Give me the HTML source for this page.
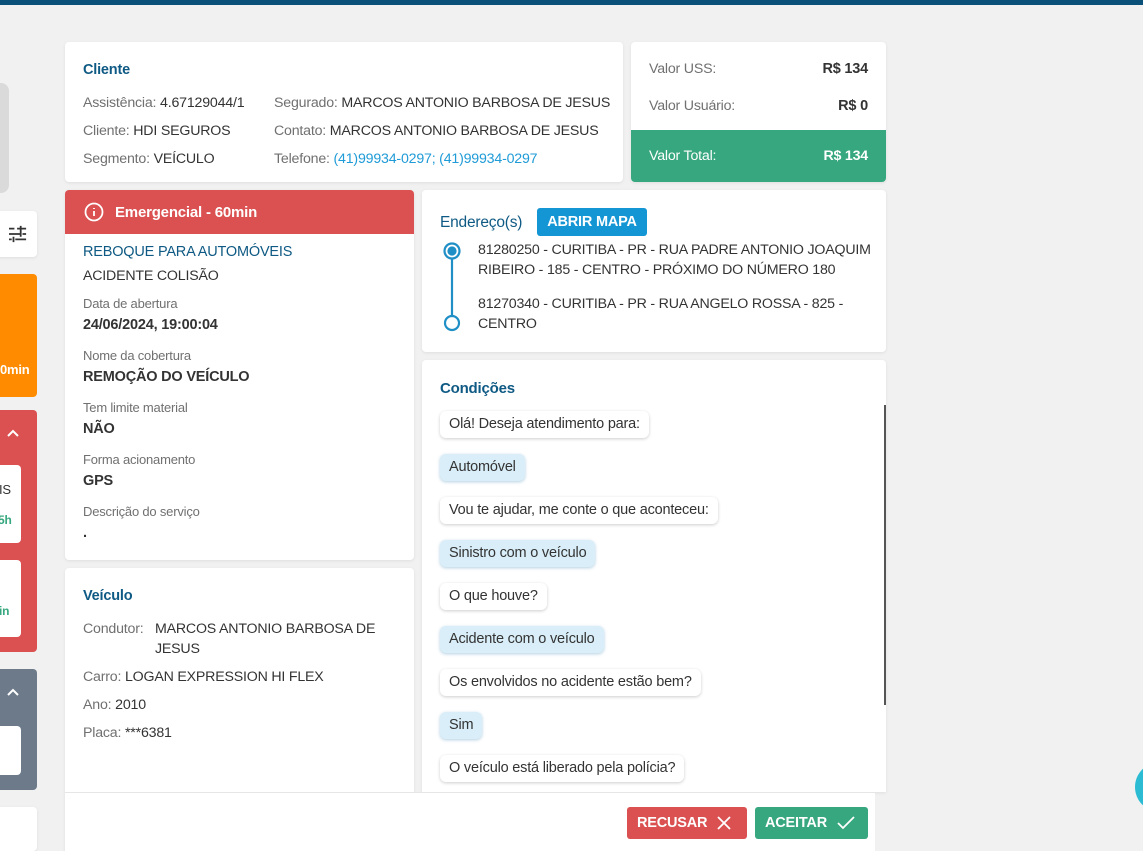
<!DOCTYPE html>
<html><head><meta charset="utf-8"><style>
*{box-sizing:border-box;margin:0;padding:0}
html,body{width:1143px;height:851px;overflow:hidden}
body{background:#f1f1f1;font-family:"Liberation Sans",sans-serif;font-size:14.2px;color:#333;position:relative;letter-spacing:-0.2px}
.a{position:absolute}
.card{position:absolute;background:#fff;border-radius:4px;box-shadow:0 1px 3px rgba(0,0,0,.08)}
.t{color:#0f5a84;font-weight:bold;font-size:14.5px}
.g{color:#707070}
.lb{color:#707070;font-size:13px}
.v{font-weight:bold;color:#333;font-size:14.5px}
.b{position:absolute;left:440px;height:27px;line-height:27px;padding:0 9px;border-radius:6px;background:#fff;box-shadow:0 1px 3px rgba(0,0,0,.2);font-size:14.5px;white-space:nowrap}
.b.u{background:#d9eef8;box-shadow:0 1px 3px rgba(40,120,170,.35)}
</style></head><body>
<div class="a" style="left:0;top:0;width:1143px;height:5px;background:#0b5079"></div>
<div class="a" style="left:-10px;top:83px;width:19px;height:110px;background:#dadada;border-radius:8px"></div>
<div class="card" style="left:-5px;top:211px;width:42px;height:46px">
<svg class="a" style="left:14px;top:14px" width="18" height="18" viewBox="0 0 20 20" fill="none" stroke="#333" stroke-width="2"><path d="M0 4h6M9 4h10M13 1v6M0 10h12M15 10h4M13 7v6M0 16h3M7 16h12M5 13v6"/></svg></div>
<div class="a" style="left:-5px;top:274px;width:42px;height:123px;background:#ff8c00;border-radius:4px"><span class="a" style="left:5px;top:88px;color:#fff;font-weight:bold;font-size:13px">0min</span></div>
<div class="a" style="left:-5px;top:410px;width:42px;height:242px;background:#db5050;border-radius:4px">
<svg class="a" style="left:12px;top:19px" width="12" height="8" viewBox="0 0 12 8" fill="none" stroke="#fff" stroke-width="2"><path d="M1 7l5-5 5 5"/></svg>
<div class="a" style="left:0;top:55px;width:26px;height:78px;background:#fff;border-radius:4px"><span class="a" style="left:4px;top:17px;font-size:13px">IS</span><span class="a" style="left:3px;top:48px;font-size:12px;color:#36a77e;font-weight:bold">5h</span></div>
<div class="a" style="left:0;top:150px;width:26px;height:77px;background:#fff;border-radius:4px"><span class="a" style="left:4px;top:44px;font-size:12px;color:#36a77e;font-weight:bold">in</span></div>
</div>
<div class="a" style="left:-5px;top:669px;width:42px;height:121px;background:#6c7a8a;border-radius:4px">
<svg class="a" style="left:12px;top:19px" width="12" height="8" viewBox="0 0 12 8" fill="none" stroke="#fff" stroke-width="2"><path d="M1 7l5-5 5 5"/></svg>
<div class="a" style="left:0;top:57px;width:26px;height:49px;background:#fff;border-radius:4px"></div></div>
<div class="card" style="left:-5px;top:807px;width:42px;height:44px"></div>
<div class="card" style="left:65px;top:42px;width:558px;height:140px">
<div class="a t" style="left:18px;top:20px">Cliente</div>
<div class="a" style="left:18px;top:47px;line-height:28px"><span class="g">Assistência:</span> 4.67129044/1<br><span class="g">Cliente:</span> HDI SEGUROS<br><span class="g">Segmento:</span> VEÍCULO</div>
<div class="a" style="left:209px;top:47px;line-height:28px;white-space:nowrap"><span class="g">Segurado:</span> MARCOS ANTONIO BARBOSA DE JESUS<br><span class="g">Contato:</span> MARCOS ANTONIO BARBOSA DE JESUS<br><span class="g">Telefone:</span> <span style="color:#1f9bd7">(41)99934-0297; (41)99934-0297</span></div>
</div>
<div class="card" style="left:631px;top:42px;width:255px;height:140px;overflow:hidden">
<div class="a g" style="left:18px;top:19px">Valor USS:</div><div class="a v" style="right:18px;top:19px">R$ 134</div>
<div class="a g" style="left:18px;top:56px">Valor Usuário:</div><div class="a v" style="right:18px;top:56px">R$ 0</div>
<div class="a" style="left:0;top:88px;width:255px;height:52px;background:#36a77e;color:#fff">
<span class="a" style="left:18px;top:18px">Valor Total:</span><span class="a" style="right:18px;top:18px;font-weight:bold">R$ 134</span></div>
</div>
<div class="card" style="left:65px;top:190px;width:349px;height:370px;overflow:hidden">
<div class="a" style="left:0;top:0;width:349px;height:44px;background:#db5050;color:#fff;font-weight:bold;font-size:15px">
<svg class="a" style="left:19px;top:12px" width="20" height="20" viewBox="0 0 20 20" fill="none" stroke="#fff" stroke-width="1.8"><circle cx="10" cy="10" r="8.5"/><path d="M10 9v5M10 6v1"/></svg>
<span class="a" style="left:50px;top:14px">Emergencial - 60min</span></div>
<div class="a" style="left:18px;top:54px;color:#0f5a84;font-size:14.5px">REBOQUE PARA AUTOMÓVEIS</div>
<div class="a" style="left:18px;top:78px">ACIDENTE COLISÃO</div>
<div class="a lb" style="left:18px;top:106px">Data de abertura</div><div class="a v" style="left:18px;top:127px">24/06/2024, 19:00:04</div>
<div class="a lb" style="left:18px;top:158px">Nome da cobertura</div><div class="a v" style="left:18px;top:179px">REMOÇÃO DO VEÍCULO</div>
<div class="a lb" style="left:18px;top:210px">Tem limite material</div><div class="a v" style="left:18px;top:231px">NÃO</div>
<div class="a lb" style="left:18px;top:262px">Forma acionamento</div><div class="a v" style="left:18px;top:283px">GPS</div>
<div class="a lb" style="left:18px;top:314px">Descrição do serviço</div><div class="a v" style="left:18px;top:335px">.</div>
</div>
<div class="card" style="left:65px;top:568px;width:349px;height:283px;border-radius:4px 4px 0 0">
<div class="a t" style="left:18px;top:20px">Veículo</div>
<div class="a" style="left:18px;top:51px;line-height:20px"><span class="g">Condutor:</span></div>
<div class="a" style="left:90px;top:51px;line-height:20px;width:230px">MARCOS ANTONIO BARBOSA DE JESUS</div>
<div class="a" style="left:18px;top:95px;line-height:28px"><span class="g">Carro:</span> LOGAN EXPRESSION HI FLEX<br><span class="g">Ano:</span> 2010<br><span class="g">Placa:</span> ***6381</div>
</div>
<div class="card" style="left:422px;top:190px;width:464px;height:162px">
<div class="a t" style="left:18px;top:24px;font-weight:normal;font-size:15.5px">Endereço(s)</div>
<div class="a" style="left:115px;top:18px;width:110px;height:28px;background:#1596d4;border-radius:3px;color:#fff;font-weight:bold;line-height:28px;text-align:center;font-size:14.5px">ABRIR MAPA</div>
<svg class="a" style="left:20px;top:52px" width="20" height="92" viewBox="0 0 20 92" fill="none" stroke="#1f8fc6" stroke-width="2.2"><circle cx="10" cy="9" r="7.5"/><circle cx="10" cy="9" r="3.5" fill="#1f8fc6"/><path d="M10 17v57"/><circle cx="10" cy="81" r="7"/></svg>
<div class="a" style="left:56px;top:50px;line-height:20px;width:395px">81280250 - CURITIBA - PR - RUA PADRE ANTONIO JOAQUIM RIBEIRO - 185 - CENTRO - PRÓXIMO DO NÚMERO 180</div>
<div class="a" style="left:56px;top:104px;line-height:20px;width:380px">81270340 - CURITIBA - PR - RUA ANGELO ROSSA - 825 - CENTRO</div>
</div>
<div class="card" style="left:422px;top:360px;width:464px;height:432px;border-radius:4px 4px 0 0"></div>
<div class="a t" style="left:440px;top:380px;font-size:15px">Condições</div>
<div class="a" style="left:884px;top:405px;width:2px;height:300px;background:#555"></div>
<div class="b" style="top:411px">Olá! Deseja atendimento para:</div>
<div class="b u" style="top:454px">Automóvel</div>
<div class="b" style="top:497px">Vou te ajudar, me conte o que aconteceu:</div>
<div class="b u" style="top:540px">Sinistro com o veículo</div>
<div class="b" style="top:583px">O que houve?</div>
<div class="b u" style="top:626px">Acidente com o veículo</div>
<div class="b" style="top:669px">Os envolvidos no acidente estão bem?</div>
<div class="b u" style="top:712px">Sim</div>
<div class="b" style="top:755px">O veículo está liberado pela polícia?</div>
<div class="a" style="left:65px;top:792px;width:810px;height:59px;background:#fff;border-top:1px solid #e6e6e6"></div>
<div class="a" style="left:627px;top:807px;width:120px;height:32px;background:#db5050;border-radius:3px;color:#fff;font-weight:bold;font-size:14.5px;line-height:32px;padding-left:10px">RECUSAR
<svg class="a" style="left:90px;top:9px" width="14" height="14" viewBox="0 0 14 14" stroke="#fff" stroke-width="1.8"><path d="M1 1l12 12M13 1L1 13"/></svg></div>
<div class="a" style="left:755px;top:807px;width:113px;height:32px;background:#36a77e;border-radius:3px;color:#fff;font-weight:bold;font-size:14.5px;line-height:32px;padding-left:10px">ACEITAR
<svg class="a" style="left:82px;top:9px" width="18" height="14" viewBox="0 0 18 14" fill="none" stroke="#fff" stroke-width="1.8"><path d="M1 7l5 5L17 1"/></svg></div>
<div class="a" style="left:1135px;top:762px;width:50px;height:50px;border-radius:50%;background:#2bbcd4"></div>
</body></html>
